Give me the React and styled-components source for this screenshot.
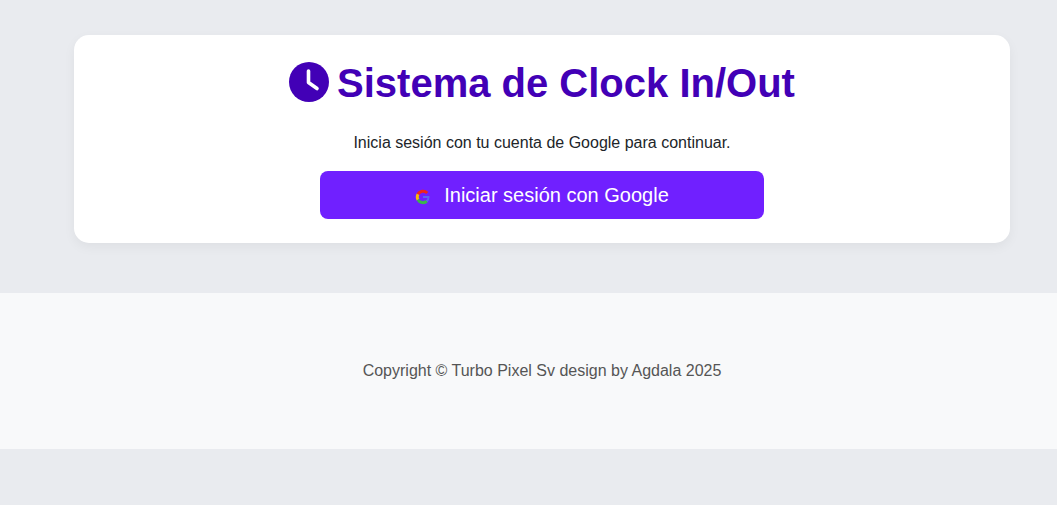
import React from "react";
import styled, { createGlobalStyle } from "styled-components";

const GlobalStyle = createGlobalStyle`
  html, body {
    margin: 0;
    padding: 0;
    background-color: #e9ebef;
    font-family: "Liberation Sans", Arial, sans-serif;
  }
`;

const Page = styled.div`
  min-height: 505px;
  display: flex;
  flex-direction: column;
`;

const Main = styled.main`
  padding: 35px 47px 50px 74px;
`;

const Card = styled.section`
  height: 208px;
  box-sizing: border-box;
  background-color: #fff;
  border-radius: 15px;
  box-shadow: 0 4px 12px rgba(0, 0, 0, 0.05);
  padding-top: 24px;
  display: flex;
  flex-direction: column;
  align-items: center;
`;

const Title = styled.h1`
  margin: 0;
  height: 46px;
  display: flex;
  align-items: center;
  gap: 8px;
  font-size: 40px;
  line-height: 46px;
  font-weight: 700;
  color: #4200b6;
`;

const TitleText = styled.span`
  padding-top: 2px;
`;

const Subtitle = styled.p`
  margin: 29px 0 0;
  font-size: 16px;
  line-height: 18px;
  color: #212529;
`;

const GoogleButton = styled.button`
  margin-top: 19px;
  width: 444px;
  height: 48px;
  border: none;
  border-radius: 8px;
  background-color: #7020ff;
  color: #fff;
  font-family: inherit;
  font-size: 20px;
  display: flex;
  align-items: center;
  justify-content: center;
  gap: 13px;
  cursor: pointer;
`;

const Footer = styled.footer`
  height: 156px;
  padding-left: 27px;
  background-color: #f8f9fa;
  display: flex;
  align-items: center;
  justify-content: center;
  font-size: 16px;
  color: #555;
`;

const GoogleMark = styled.svg`
  margin-top: 4px;
`;

const ClockIcon = () => (
  <svg width="40" height="40" viewBox="0 0 40 40" aria-hidden="true">
    <circle cx="20" cy="20" r="20" fill="#4200b6" />
    <path d="M19.500 9V20.500L28 26.500" fill="none" stroke="#fff" strokeWidth="3.600" strokeLinecap="round" strokeLinejoin="round" />
  </svg>
);

const GoogleIcon = () => (
  <GoogleMark width="16" height="16" viewBox="0 0 16 16" fill="none" aria-hidden="true">
    <path d="M3 5.300A5.700 5.700 0 0 1 12.200 4.100" stroke="#f0261c" strokeWidth="3" />
    <path d="M3 5.300a5.700 5.700 0 0 0 0 5.400" stroke="#f7bb08" strokeWidth="3" />
    <path d="M3 10.700a5.700 5.700 0 0 0 8.800 1.500" stroke="#3cb54a" strokeWidth="3" />
    <path d="M8 8h5.500a5.700 5.700 0 0 1-1.700 4.200" stroke="#5a68f0" strokeWidth="2" />
  </GoogleMark>
);

function App() {
  return (
    <Page>
      <GlobalStyle />
      <Main>
        <Card>
          <Title>
            <ClockIcon />
            <TitleText>Sistema de Clock In/Out</TitleText>
          </Title>
          <Subtitle>Inicia sesión con tu cuenta de Google para continuar.</Subtitle>
          <GoogleButton>
            <GoogleIcon />
            Iniciar sesión con Google
          </GoogleButton>
        </Card>
      </Main>
      <Footer>Copyright © Turbo Pixel Sv design by Agdala 2025</Footer>
    </Page>
  );
}

export default App;
